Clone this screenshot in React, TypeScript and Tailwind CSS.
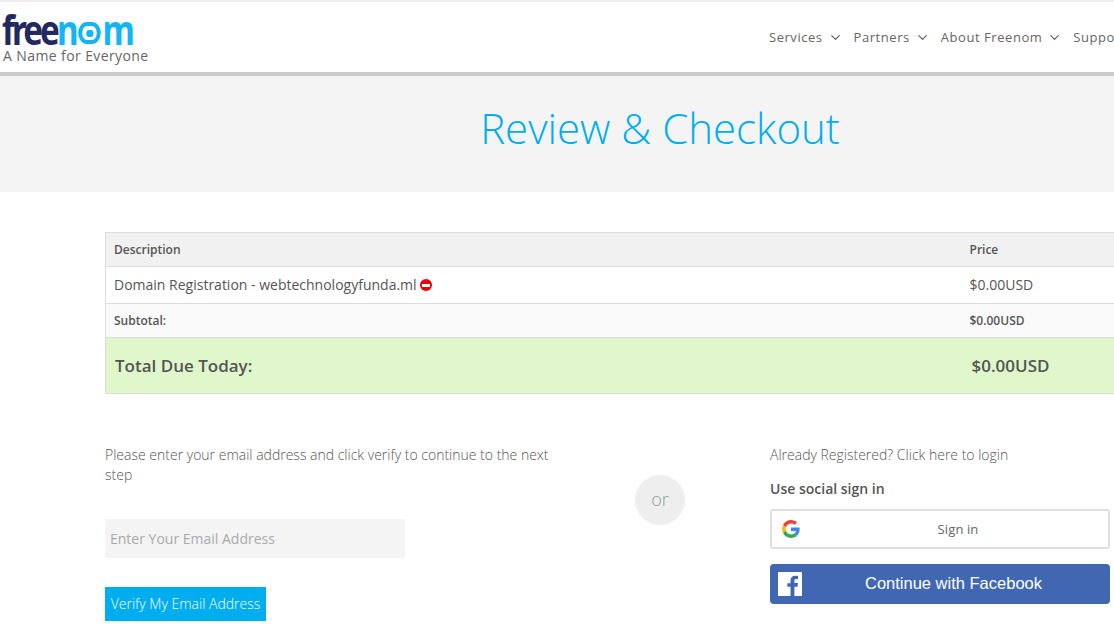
import React from 'react';
import { ChevronDown } from 'lucide-react';

const navItems = ['Services', 'Partners', 'About Freenom', 'Support'];

function GoogleIcon() {
  return (
    <svg width="18" height="18" viewBox="0 0 48 48">
      <path fill="#EA4335" d="M24 9.5c3.54 0 6.71 1.22 9.21 3.6l6.85-6.85C35.9 2.38 30.47 0 24 0 14.62 0 6.51 5.38 2.56 13.22l7.98 6.19C12.43 13.72 17.74 9.5 24 9.5z" />
      <path fill="#4285F4" d="M46.98 24.55c0-1.57-.15-3.09-.38-4.55H24v9.02h12.94c-.58 2.96-2.26 5.48-4.78 7.18l7.73 6c4.51-4.18 7.09-10.36 7.09-17.65z" />
      <path fill="#FBBC05" d="M10.53 28.59c-.48-1.45-.76-2.99-.76-4.59s.27-3.14.76-4.59l-7.98-6.19C.92 16.46 0 20.12 0 24c0 3.88.92 7.54 2.56 10.78l7.97-6.19z" />
      <path fill="#34A853" d="M24 48c6.48 0 11.93-2.13 15.89-5.81l-7.73-6c-2.15 1.45-4.92 2.3-8.16 2.3-6.26 0-11.57-4.22-13.47-9.91l-7.98 6.19C6.51 42.62 14.62 48 24 48z" />
    </svg>
  );
}

function FacebookIcon() {
  return (
    <svg width="24" height="24" viewBox="0 0 24 24">
      <path fill="#ffffff" d="M0 0h24v24h-7.6v-9.3h3.1l.5-3.6h-3.6V8.8c0-1 .3-1.8 1.8-1.8H20V3.8c-.3 0-1.5-.1-2.8-.1-2.8 0-4.7 1.700-4.700 4.800v2.700H9.300v3.600h3.200V24H0z" />
    </svg>
  );
}

export default function App() {
  return (
    <div className="w-[1114px] h-[632px] overflow-hidden bg-white text-[#555] font-['Open_Sans',sans-serif]">
      <div className="w-[1320px]">
        <header className="h-[76px] border-t-2 border-t-[#eeeeee] border-b-4 border-b-[#cccccc] flex justify-between pl-[2px] pr-[174px]">
          <div className="pt-[9px]">
            <div className="flex items-center h-[36px] text-[41px] font-bold font-['Noto_Sans',sans-serif] leading-none origin-left scale-x-[0.81]">
              <span className="text-[#23285f] tracking-[-3.6px]">free</span>
              <span className="text-[#12b5f5] tracking-[-2.6px]">n</span>
              <span className="w-[28px] h-[22px] rounded-full border-x-[5px] border-y-4 border-[#12b5f5] mx-[2px] mt-[8px] shrink-0 flex items-center justify-center">
                <span className="w-[9px] h-[7px] rounded-full bg-[#12b5f5]" />
              </span>
              <span className="text-[#12b5f5] tracking-[-2.6px]">m</span>
            </div>
            <div className="text-sm leading-[18px] pl-px tracking-[0.4px] text-[#666]">A Name for Everyone</div>
          </div>
          <nav className="flex items-start gap-[11px] pt-[26px] text-[13px] leading-[18px] tracking-[0.55px] text-[#666]">
            {navItems.map((item) => (
              <span key={item} className="flex items-center gap-[5px]">
                {item}
                <ChevronDown size={15} strokeWidth={2} />
              </span>
            ))}
          </nav>
        </header>

        <div className="h-[116px] bg-[#f4f4f4] flex items-center justify-center pb-[12px]">
          <h1 className="text-[42px] font-light text-[#00aeef] leading-none">Review &amp; Checkout</h1>
        </div>

        <main className="px-[105px] pt-[40px]">
          <table className="w-full border-collapse border border-[#dddddd]">
            <tbody>
              <tr className="h-[34px] bg-[#f1f1f1] text-xs font-semibold border-b border-[#dddddd]">
                <td className="pl-2">Description</td>
                <td className="pl-2 w-[253px]">Price</td>
              </tr>
              <tr className="h-[37px] text-sm border-b border-[#dddddd]">
                <td className="pl-2">
                  <span className="flex items-center gap-[3px]">
                    Domain Registration - webtechnologyfunda.ml
                    <span className="w-[12px] h-[12px] rounded-full bg-[#ee0000] flex items-center justify-center">
                      <span className="w-[8px] h-[3px] bg-white" />
                    </span>
                  </span>
                </td>
                <td className="pl-2">$0.00USD</td>
              </tr>
              <tr className="h-[34px] bg-[#fafafa] text-xs font-semibold border-b border-[#dddddd]">
                <td className="pl-2">Subtotal:</td>
                <td className="pl-2">$0.00USD</td>
              </tr>
              <tr className="h-[56px] bg-[#dff7cb] text-[17px] font-semibold">
                <td className="pl-[9px]">Total Due Today:</td>
                <td className="pl-[10px]">$0.00USD</td>
              </tr>
            </tbody>
          </table>

          <div className="flex pt-[50px]">
            <div className="w-[450px] pt-px text-sm leading-[20px] font-light">
              <p>Please enter your email address and click verify to continue to the next step</p>
              <input
                type="text"
                placeholder="Enter Your Email Address"
                className="block mt-[34px] w-[300px] h-[39px] bg-[#f4f4f4] px-[5px] text-sm font-normal placeholder:text-[#aaaaaa] outline-none"
              />
              <button className="block mt-[29px] h-[34px] w-[161px] bg-[#00aeef] text-white text-sm font-light text-center">
                Verify My Email Address
              </button>
            </div>

            <div className="ml-[80px] mt-[31px] w-[50px] h-[50px] pb-[3px] rounded-full bg-[#eeeeee] text-[#7fa88f] text-lg font-light flex items-center justify-center shrink-0">
              or
            </div>

            <div className="ml-[85px] w-[340px]">
              <p className="text-sm leading-[21px] font-light">Already Registered? Click here to login</p>
              <p className="text-sm font-semibold leading-[21px] mt-[13px]">Use social sign in</p>
              <button className="mt-[10px] w-full h-[40px] border-2 border-[#e0e0e0] rounded-[3px] bg-white flex items-center px-[10px] text-[13px] tracking-[0.1px] text-[#666]">
                <GoogleIcon />
                <span className="flex-1 text-center pl-[18px] pt-px">Sign in</span>
              </button>
              <button className="mt-[15px] w-full h-[40px] rounded-[4px] bg-[#4267b2] flex items-center px-[8px] text-[16.5px] text-white font-['Liberation_Sans',sans-serif]">
                <FacebookIcon />
                <span className="flex-1 text-center pl-[3px] pb-px">Continue with Facebook</span>
              </button>
            </div>
          </div>
        </main>
      </div>
    </div>
  );
}
